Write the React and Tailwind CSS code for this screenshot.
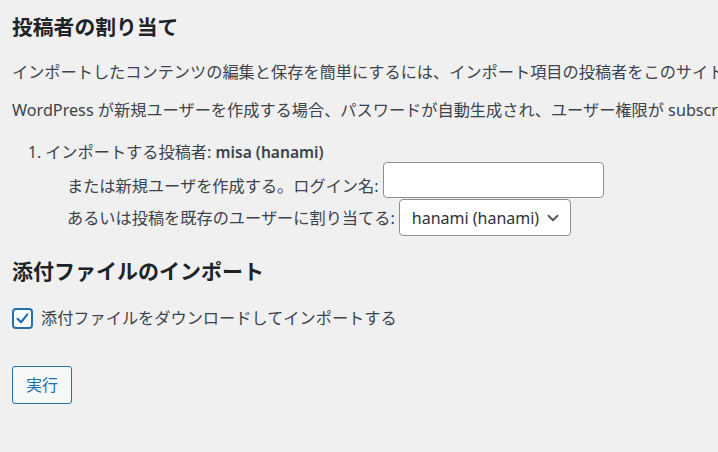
import { ChevronDown } from 'lucide-react';

const font = { fontFamily: '"Noto Sans", "Noto Sans CJK JP", sans-serif' };

export default function App() {
  return (
    <div
      className="w-[718px] h-[452px] overflow-hidden bg-[#f0f0f1] text-[#3c434a] pl-3 whitespace-nowrap"
      style={font}
    >
      <h2 className="pt-[14px] text-[20.8px] leading-[26px] font-semibold text-[#1d2327]">投稿者の割り当て</h2>

      <p className="mt-5 text-[16.2px] leading-6">
        インポートしたコンテンツの編集と保存を簡単にするには、インポート項目の投稿者をこのサイトの既存ユーザーに割り当ててください。
      </p>
      <p className="mt-[14px] text-[16.2px] leading-6">
        WordPress が新規ユーザーを作成する場合、パスワードが自動生成され、ユーザー権限が subscriber に設定されます。
      </p>

      <ol className="mt-[18px] pl-4 text-[16.2px]">
        <li className="leading-6">
          <span className="text-[15.6px]">1. </span>インポートする投稿者:{' '}
          <strong className="font-semibold text-[15.6px]">misa (hanami)</strong>
        </li>
        <li className="pl-[39px]">
          <div className="flex items-end gap-1 mt-[-2px]">
            <span className="leading-6">または新規ユーザを作成する。ログイン名:</span>
            <input
              type="text"
              className="w-[221px] h-[36px] bg-white border border-[#8c8f94] rounded-[4px] outline-none"
            />
          </div>
          <div className="flex items-center gap-1 mt-[1px]">
            <span className="leading-6">あるいは投稿を既存のユーザーに割り当てる:</span>
            <div className="relative w-[172px] h-[37px]">
              <select
                className="appearance-none w-full h-full bg-white border border-[#8c8f94] rounded-[4px] pl-3 text-[16px] text-[#2c3338] outline-none"
                style={font}
                defaultValue="hanami"
              >
                <option value="hanami">hanami (hanami)</option>
              </select>
              <ChevronDown
                size={18}
                strokeWidth={2.5}
                className="absolute right-[9px] top-[10px] text-[#50575e] pointer-events-none"
              />
            </div>
          </div>
        </li>
      </ol>

      <h2 className="mt-[22px] text-[21px] leading-[26px] font-semibold text-[#1d2327]">添付ファイルのインポート</h2>

      <label className="mt-[22px] flex items-center gap-[8px] text-[16.2px]">
        <span className="w-[21px] h-[21px] bg-white border-2 border-[#2271b1] rounded-[4px] flex items-center justify-center">
          <svg width="15" height="15" viewBox="0 0 20 20">
            <path d="M3.5 10.5 L8 15 L16.5 4.5" fill="none" stroke="#2271b1" strokeWidth="3" strokeLinecap="round" strokeLinejoin="round" />
          </svg>
        </span>
        <span className="leading-6">添付ファイルをダウンロードしてインポートする</span>
      </label>

      <button
        className="mt-[36px] w-[60px] h-[38px] bg-[#f6f7f7] border border-[#2271b1] rounded-[3px] text-[#2271b1] text-[16px]"
        style={font}
      >
        実行
      </button>
    </div>
  );
}
